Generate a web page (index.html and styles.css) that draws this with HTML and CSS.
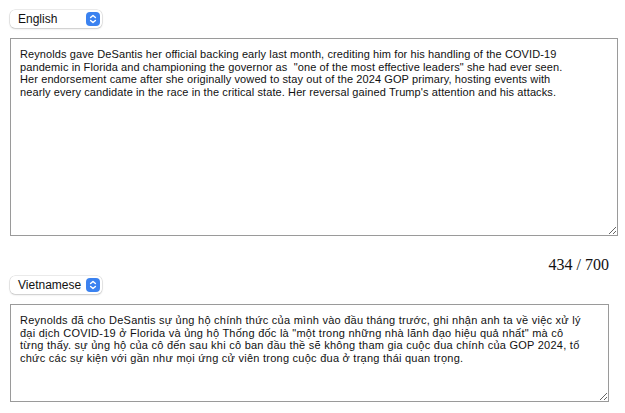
FILE: index.html
```html
<!DOCTYPE html>
<html lang="en">
<head>
    <meta charset="UTF-8">
    <meta name="viewport" content="width=device-width, initial-scale=1.0">
    <title>Translator</title>
    <link rel="stylesheet" href="styles.css">
</head>
<body>

    <div class="translator">
        <div class="lang-select">
            <span class="lang-name">English</span>
            <span class="lang-arrows">
                <svg width="14" height="14" viewBox="0 0 14 14">
                    <rect x="0" y="0" width="14" height="14" rx="4" fill="#3b82f0"/>
                    <path d="M4.6 5.6 L7 3.4 L9.4 5.6 M4.6 8.4 L7 10.6 L9.4 8.4" stroke="#fff" stroke-width="1.4" fill="none" stroke-linecap="round" stroke-linejoin="round"/>
                </svg>
            </span>
        </div>
        <textarea class="text-box source-box">Reynolds gave DeSantis her official backing early last month, crediting him for his handling of the COVID-19
pandemic in Florida and championing the governor as  "one of the most effective leaders" she had ever seen.
Her endorsement came after she originally vowed to stay out of the 2024 GOP primary, hosting events with
nearly every candidate in the race in the critical state. Her reversal gained Trump's attention and his attacks.</textarea>

        <div class="counter">434 / 700</div>

        <div class="lang-select">
            <span class="lang-name">Vietnamese</span>
            <span class="lang-arrows">
                <svg width="14" height="14" viewBox="0 0 14 14">
                    <rect x="0" y="0" width="14" height="14" rx="4" fill="#3b82f0"/>
                    <path d="M4.6 5.6 L7 3.4 L9.4 5.6 M4.6 8.4 L7 10.6 L9.4 8.4" stroke="#fff" stroke-width="1.4" fill="none" stroke-linecap="round" stroke-linejoin="round"/>
                </svg>
            </span>
        </div>
        <textarea class="text-box target-box" lang="vi">Reynolds đã cho DeSantis sự ủng hộ chính thức của mình vào đầu tháng trước, ghi nhận anh ta về việc xử lý
đại dịch COVID-19 ở Florida và ủng hộ Thống đốc là "một trong những nhà lãnh đạo hiệu quả nhất" mà cô
từng thấy. sự ủng hộ của cô đến sau khi cô ban đầu thề sẽ không tham gia cuộc đua chính của GOP 2024, tổ
chức các sự kiện với gần như mọi ứng cử viên trong cuộc đua ở trạng thái quan trọng.</textarea>
    </div>

</body>
</html>
```

FILE: styles.css
```css
body {
    margin: 0;
    padding: 10px;
    background: white;
    font-family: "Liberation Sans", Arial, sans-serif;
    color: #111;
}
.translator {
    display: flex;
    flex-direction: column;
    align-items: flex-start;
}
.lang-select {
    width: 92px;
    height: 18px;
    box-sizing: border-box;
    display: flex;
    align-items: center;
    justify-content: space-between;
    padding: 0 2px 0 8px;
    background: white;
    border-radius: 5px;
    box-shadow: 0 0 0 0.5px rgba(0, 0, 0, 0.15), 0 1px 2px rgba(0, 0, 0, 0.15);
    font-size: 12px;
}
.lang-arrows {
    display: flex;
}
.text-box {
    box-sizing: border-box;
    margin-top: 10px;
    padding: 9px;
    border: 1px solid #9a9a9a;
    font-family: "Liberation Sans", Arial, sans-serif;
    font-size: 11px;
    line-height: 12.6px;
    color: #111;
    background: white;
    white-space: pre-wrap;
    outline: none;
}
.source-box {
    width: 608px;
    height: 198px;
    letter-spacing: 0.1px;
}
.target-box {
    width: 599px;
    height: 98px;
    letter-spacing: 0.25px;
}
.counter {
    align-self: stretch;
    box-sizing: border-box;
    padding: 20px 6px 0 0;
    height: 40px;
    text-align: right;
    font-family: "Liberation Serif", "Times New Roman", serif;
    font-size: 16px;
    color: #111;
}
```
